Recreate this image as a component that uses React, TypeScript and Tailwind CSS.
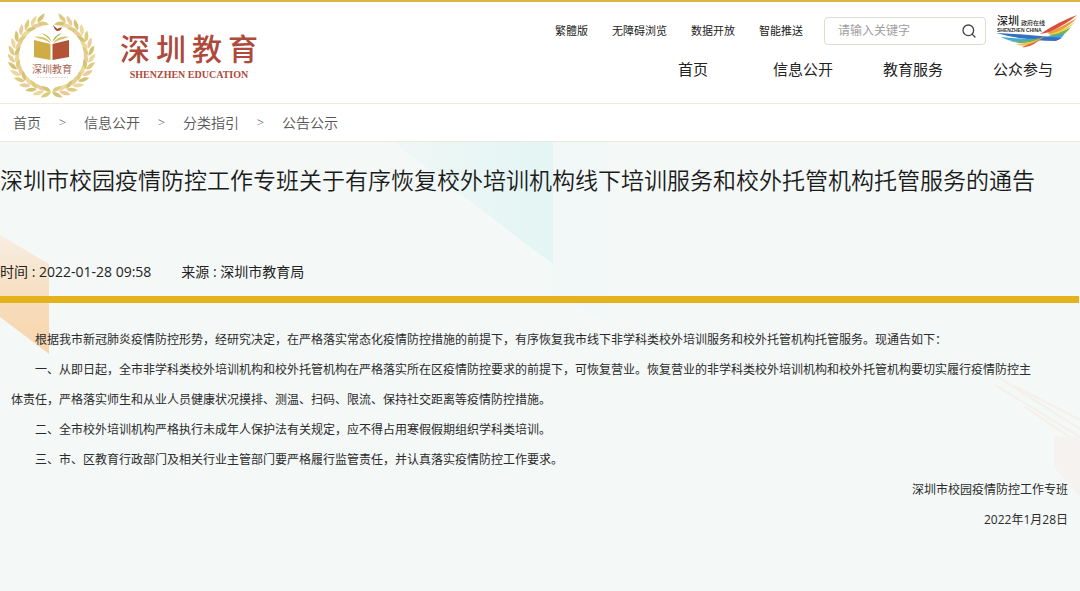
import { Fragment } from "react";
import { Search } from "lucide-react";

const utilityLinks = ["繁體版", "无障碍浏览", "数据开放", "智能推送"];
const navLinks = ["首页", "信息公开", "教育服务", "公众参与"];
const crumbs = ["首页", "信息公开", "分类指引", "公告公示"];

const paragraphs = [
  "根据我市新冠肺炎疫情防控形势，经研究决定，在严格落实常态化疫情防控措施的前提下，有序恢复我市线下非学科类校外培训服务和校外托管机构托管服务。现通告如下：",
  "一、从即日起，全市非学科类校外培训机构和校外托管机构在严格落实所在区疫情防控要求的前提下，可恢复营业。恢复营业的非学科类校外培训机构和校外托管机构要切实履行疫情防控主体责任，严格落实师生和从业人员健康状况摸排、测温、扫码、限流、保持社交距离等疫情防控措施。",
  "二、全市校外培训机构严格执行未成年人保护法有关规定，应不得占用寒假假期组织学科类培训。",
  "三、市、区教育行政部门及相关行业主管部门要严格履行监管责任，并认真落实疫情防控工作要求。",
];

const leafColors = ["#dfcb7c", "#e9da9c", "#d3c474", "#ecca9c"];

function Wreath() {
  const leaves = [];
  for (let side = -1; side <= 1; side += 2) {
    for (let i = 0; i < 15; i++) {
      const deg = 90 - side * (1 + i * 11.2);
      const rad = (deg * Math.PI) / 180;
      const x = 43.5 + 37 * Math.cos(rad);
      const y = 43 + 36 * Math.sin(rad);
      const heading = deg - side * 90;
      leaves.push(
        <g key={`${side}-${i}`} transform={`translate(${x} ${y}) rotate(${heading})`}>
          <path d="M0 0Q1 -5.500 10 -6Q8 0 0 0Z" fill={leafColors[i % 4]} />
          <path d="M0 0Q1 5.500 10 6Q8 0 0 0Z" fill={leafColors[(i + 2) % 4]} />
        </g>
      );
    }
  }
  return <>{leaves}</>;
}

function Emblem() {
  return (
    <svg viewBox="0 0 88 86" className="h-[86px] w-[88px] shrink-0" role="img" aria-label="深圳教育">
      <Wreath />
      <path d="M26 27L42.500 31V47L26 44Z" fill="#cfac45" />
      <path d="M61 27L44.500 31V47L61 44Z" fill="#b35436" />
      <path d="M26 24Q37 22 43 30Q35 26 26 24Z" fill="#dcc56c" />
      <path d="M33 20Q42 22 43.500 29Q40 24 33 20Z" fill="#c2bd58" />
      <path d="M61 24Q51 22 45 30Q53 26 61 24Z" fill="#d5be68" />
      <path d="M54 20Q46 22 44.500 29Q48 24 54 20Z" fill="#a8b65a" />
      <path d="M45 12Q47 14 49.500 16Q51 14 54 14.500Q52 18.500 49 18Q46.500 17 45 12Z" fill="#a34a35" />
      <text x="44" y="60" textAnchor="middle" fontSize="10" fill="#a5654f" fontFamily="Noto Sans CJK SC, sans-serif">
        深圳教育
      </text>
      <path d="M29 64.500H60" stroke="#ecd6c8" strokeWidth="1" strokeDasharray="2 1" />
    </svg>
  );
}

function PortalLogo() {
  return (
    <svg viewBox="0 0 82 34" className="h-[34px] w-[82px] overflow-visible" role="img" aria-label="深圳政府在线">
      <path d="M81 1Q64 7 44 20L54 18Q72 9 81 1Z" fill="#d84f3b" />
      <path d="M81 4Q66 13 51 19L57 21Q74 12 81 4Z" fill="#ee9b42" />
      <path d="M79 8Q66 17 54 20L60 22Q73 15 79 8Z" fill="#edd452" />
      <path d="M75 13Q64 20 52 21L62 24Q71 19 75 13Z" fill="#72b84b" />
      <path d="M69 19Q60 23 50 22L62 26Q67 23 69 19Z" fill="#4a9fd6" />
      <path d="M0 19Q25 20 66 24L60 27Q25 26 0 19Z" fill="#3470bf" />
      <path d="M5 23Q24 25 43 25L28 28Q14 28 5 23Z" fill="#4aa9d9" />
      <path d="M14 27Q33 28 50 22L40 27Q26 31 14 27Z" fill="#63b36a" />
      <path d="M20 30Q35 29 48 23L34 31Q26 33 20 30Z" fill="#ecc34e" />
      <path d="M26 33Q38 29 50 22L38 30Q32 34 26 33Z" fill="#df6842" />
      <g fill="#252525" fontFamily="Noto Sans CJK SC, sans-serif" fontWeight="500">
        <text x="1" y="11" fontSize="11">深圳</text>
        <text x="25" y="11" fontSize="6">政府在线</text>
      </g>
      <text x="1" y="18" fontSize="5" fill="#333" fontWeight="700" fontFamily="Liberation Sans, sans-serif">
        SHENZHEN CHINA
      </text>
    </svg>
  );
}

function Backdrop() {
  return (
    <div aria-hidden="true" className="pointer-events-none absolute inset-0 overflow-hidden">
      <svg viewBox="0 0 50 220" className="absolute left-0 top-0 h-[220px] w-[50px]">
        <defs>
          <linearGradient id="amber" x1="0" y1="0" x2="0" y2="1">
            <stop offset="0" stopColor="#f7eee3" />
            <stop offset="0.6" stopColor="#f7dcba" />
            <stop offset="1" stopColor="#f8d6ae" />
          </linearGradient>
        </defs>
        <path d="M0 93L49 122V212L0 175Z" fill="url(#amber)" />
      </svg>
      <svg viewBox="0 0 240 220" className="absolute left-1/2 top-0 h-[220px] w-[240px] -translate-x-[170px]">
        <defs>
          <linearGradient id="mint" x1="0" y1="0" x2="1" y2="0">
            <stop offset="0" stopColor="#eff7f5" />
            <stop offset="1" stopColor="#e3f5f4" />
          </linearGradient>
        </defs>
        <path d="M183 0H238V180L183 150Z" fill="#f2f7f7" />
        <path d="M25 0H183V122Q150 98 115 70Q70 38 25 0Z" fill="url(#mint)" />
      </svg>
      <svg viewBox="0 0 90 140" className="absolute right-0 top-[230px] h-[140px] w-[90px]" fill="none">
        <path d="M5 3L90 57M5 13L90 65M25 14L90 48M35 35L90 72" stroke="#f5f0e8" strokeWidth="2" />
        <path d="M64 65H90V125L64 95Z" fill="#f6f2ef" />
      </svg>
    </div>
  );
}

export default function App() {
  return (
    <div className="flex min-h-screen flex-col bg-white font-['Open_Sans','Noto_Sans_CJK_SC',sans-serif] text-[#222]">
      <header className="flex justify-between border-b border-t-2 border-b-[#efecdc] border-t-[#dcb345] pb-1">
        <a href="#home" className="flex items-start pl-2 pt-[11px]">
          <Emblem />
          <span className="flex flex-col items-center pl-6 pt-4 text-[#ad4a3b]">
            <span className="flex gap-1.5 text-[30px] font-medium leading-[40px]">
              {"深圳教育".split("").map((c) => (
                <span key={c}>{c}</span>
              ))}
            </span>
            <span className="font-['Liberation_Serif',serif] text-[10px] font-bold leading-[12px]">SHENZHEN EDUCATION</span>
          </span>
        </a>

        <div className="flex flex-col items-end pt-3">
          <div className="flex items-center">
            <div className="flex gap-6 pr-[21px] text-[11px] leading-4">
              {utilityLinks.map((t) => (
                <a key={t} href="#utility">{t}</a>
              ))}
            </div>
            <form className="flex h-7 w-[162px] items-center rounded-[4px] border border-[#dedccb] pl-[13px] pr-2" onSubmit={(e) => e.preventDefault()}>
              <input
                type="text"
                aria-label="请输入关键字"
                placeholder="请输入关键字"
                className="min-w-0 flex-1 bg-transparent text-[12px] leading-4 outline-none placeholder:text-[#a0a0a0]"
              />
              <button type="submit" aria-label="搜索">
                <Search className="size-4 text-[#444]" strokeWidth={2} />
              </button>
            </form>
            <a href="#portal" className="ml-2.5 mr-0.5">
              <PortalLogo />
            </a>
          </div>
          <nav className="mr-0.5 mt-2.5 flex text-[15px] leading-[22px]">
            {navLinks.map((t) => (
              <a key={t} href="#nav" className="w-[110px] text-center">{t}</a>
            ))}
          </nav>
        </div>
      </header>

      <nav aria-label="breadcrumb" className="flex h-[38px] items-center border-b border-[#eceade] pl-[13px] text-[14px] font-[350] text-[#555]">
        {crumbs.map((t, i) => (
          <Fragment key={t}>
            {i > 0 && <span className="w-[43px] text-center text-[13px]">&gt;</span>}
            <a href="#crumb">{t}</a>
          </Fragment>
        ))}
      </nav>

      <main className="relative flex-1 bg-[#f4f8f7]">
        <Backdrop />
        <article className="relative">
          <h1 className="pt-5 text-[23px] font-[350] leading-9 text-[#1b1b1b]">
            深圳市校园疫情防控工作专班关于有序恢复校外培训机构线下培训服务和校外托管机构托管服务的通告
          </h1>
          <div className="mr-px mt-16 flex gap-[30px] border-b-[7px] border-[#e3b21c] pb-3.5 text-[14px] leading-5">
            <span>时间 : 2022-01-28 09:58</span>
            <span>来源 : 深圳市教育局</span>
          </div>
          <div className="pl-[11px] pr-3 pt-[22px] text-[12px] leading-[30px] text-[#2b2b2b]">
            <div className="pr-9">
              {paragraphs.map((p) => (
                <p key={p} className="indent-6">{p}</p>
              ))}
            </div>
            <p className="text-right">深圳市校园疫情防控工作专班</p>
            <p className="text-right">2022年1月28日</p>
          </div>
        </article>
      </main>
    </div>
  );
}
